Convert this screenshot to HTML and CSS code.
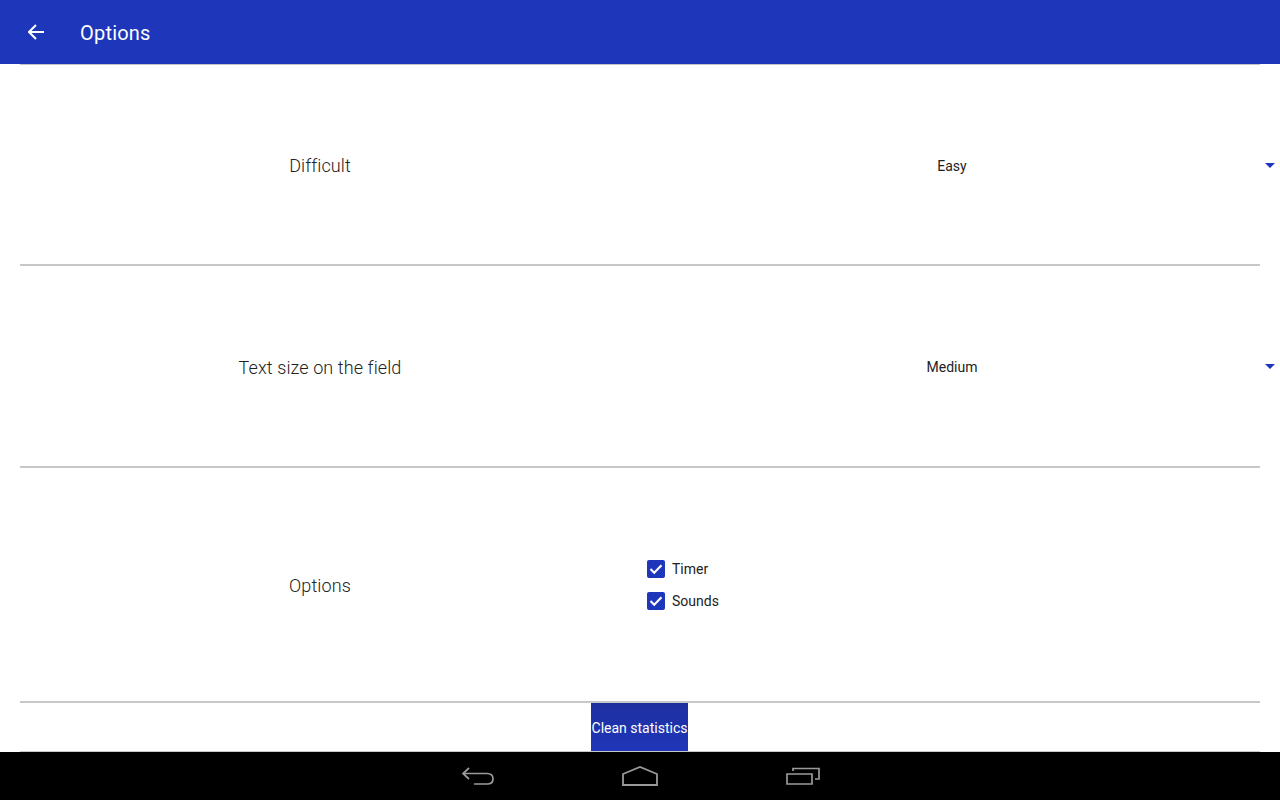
FILE: index.html
```html
<!DOCTYPE html>
<html lang="en">
<head>
  <meta charset="UTF-8">
  <title>Options</title>
  <link rel="stylesheet" href="styles.css">
</head>
<body>
  <!-- App bar -->
  <header class="app-bar">
    <svg class="back-icon" width="16" height="16" viewBox="0 0 16 16">
      <path d="M8 1 L1 8 L8 15 M1 8 H16" fill="none" stroke="#fff" stroke-width="2"/>
    </svg>
    <span class="app-title">Options</span>
  </header>

  <main class="content">
    <div class="row row-difficult">
      <div class="label">Difficult</div>
      <div class="value">
        <span>Easy</span>
        <i class="arrow"></i>
      </div>
    </div>

    <div class="row row-size">
      <div class="label">Text size on the field</div>
      <div class="value">
        <span>Medium</span>
        <i class="arrow"></i>
      </div>
    </div>

    <div class="row row-options">
      <div class="label">Options</div>
      <div class="checks">
        <div class="check">
          <svg class="box" width="18" height="18" viewBox="0 0 18 18">
            <rect width="18" height="18" rx="2" fill="#1e36b9"/>
            <path d="M3.5 9 L7.2 12.7 L14.5 5.2" fill="none" stroke="#fff" stroke-width="2.1"/>
          </svg>
          <span>Timer</span>
        </div>
        <div class="check">
          <svg class="box" width="18" height="18" viewBox="0 0 18 18">
            <rect width="18" height="18" rx="2" fill="#1e36b9"/>
            <path d="M3.5 9 L7.2 12.7 L14.5 5.2" fill="none" stroke="#fff" stroke-width="2.1"/>
          </svg>
          <span>Sounds</span>
        </div>
      </div>
    </div>

    <div class="row-button">
      <button class="clean-btn">Clean statistics</button>
    </div>
  </main>

  <!-- Android nav bar -->
  <footer class="nav-bar">
    <svg width="34" height="20" viewBox="0 0 34 20">
      <path d="M9 2 L3 7.5 L9 13 M3 7.5 H27 Q33 7.5 33 13 Q33 18 27 18 H14" fill="none" stroke="#9a9a9a" stroke-width="1.7"/>
    </svg>
    <svg width="36" height="20" viewBox="0 0 36 20">
      <path d="M1 8 L18 1 L35 8 V19 H1 Z" fill="none" stroke="#9a9a9a" stroke-width="1.8"/>
    </svg>
    <svg width="34" height="18" viewBox="0 0 34 18">
      <path d="M1 7 H26 V17 H1 Z M7 4 V1.5 H33 V12 H29" fill="none" stroke="#9a9a9a" stroke-width="1.7"/>
    </svg>
  </footer>
</body>
</html>
```

FILE: styles.css
```css
/* Base */
html, body {
  height: 100%;
}

body {
  margin: 0;
  font-family: Roboto, sans-serif;
  background-color: white;
  display: flex;
  flex-direction: column;
  overflow: hidden;
}

/* App bar */
.app-bar {
  background-color: #1e36b9;
  height: 64px;
  flex: none;
  display: flex;
  align-items: center;
  padding-left: 28px;
  box-sizing: border-box;
}

.back-icon {
  margin-right: 36px;
}

.app-title {
  color: white;
  font-size: 20px;
  letter-spacing: 0.2px;
  padding-top: 2px;
}

/* Rows */
.content {
  flex: 1;
  margin: 0 20px;
  display: flex;
  flex-direction: column;
  border-top: 1px solid #c4c4c4;
}

.row {
  display: flex;
  align-items: center;
  border-bottom: 2px solid #c8c8c8;
  box-sizing: border-box;
}

.row-difficult {
  height: 201px;
}

.row-size {
  height: 202px;
}

.row-options {
  height: 235px;
}

.label {
  width: 600px;
  padding-top: 2px;
  text-align: center;
  font-size: 18px;
  font-weight: 300;
  letter-spacing: 0.1px;
  color: #222;
}

.value {
  flex: 1;
  position: relative;
  padding: 2px 0 0 24px;
  text-align: center;
  font-size: 14px;
  color: #222;
}

.arrow {
  position: absolute;
  right: -15px;
  top: 7px;
  width: 0;
  height: 0;
  border-left: 5px solid transparent;
  border-right: 5px solid transparent;
  border-top: 5px solid #1e36b9;
}

/* Checkboxes */
.checks {
  margin-left: 27px;
  display: flex;
  flex-direction: column;
  gap: 14px;
  font-size: 14px;
  color: #222;
}

.check {
  display: flex;
  align-items: center;
  gap: 7px;
}

/* Button */
.row-button {
  display: flex;
  justify-content: center;
  flex: 1;
  border-bottom: 1px solid #c8c8c8;
}

.clean-btn {
  width: 97px;
  margin-right: 1px;
  padding: 2px 0 0;
  border: none;
  background: linear-gradient(#1e2f9f, #1e36b9);
  color: white;
  font-family: Roboto, sans-serif;
  font-size: 14px;
  white-space: nowrap;
}

/* Nav bar */
.nav-bar {
  background-color: black;
  height: 48px;
  flex: none;
  display: flex;
  justify-content: center;
  align-items: center;
  gap: 128px;
  padding-right: 1px;
}
```
